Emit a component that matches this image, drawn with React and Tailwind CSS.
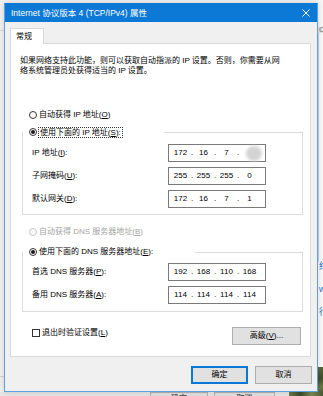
import React from "react";

const FONT = "font-['Liberation_Sans','Noto_Sans_CJK_SC',sans-serif]";

const Key = ({ k }) => <span className="underline">{k}</span>;

const Radio = ({ checked, disabled }) => (
  <span
    className={`w-[8px] h-[8px] rounded-full border bg-white flex items-center justify-center shrink-0 ${
      disabled ? "border-[#c4c4c4]" : "border-[#333]"
    }`}
  >
    {checked && <span className="w-[4px] h-[4px] rounded-full bg-[#1a1a1a]" />}
  </span>
);

const IpBox = ({ parts, blur }) => (
  <div className="relative w-[98px] h-[18px] border border-[#7a7a7a] bg-white flex items-center pl-[2px] text-[8px] text-black">
    {parts.map((p, i) => (
      <React.Fragment key={i}>
        {i > 0 && <span className="w-[4px] text-center">.</span>}
        <span className="w-[19px] text-center">{p}</span>
      </React.Fragment>
    ))}
    {blur && (
      <span className="absolute left-[77px] top-[1px] w-[16px] h-[15px] rounded-full bg-[#d4d4d4] blur-[1.5px]" />
    )}
  </div>
);

const Row = ({ label, parts, blur }) => (
  <div className="flex items-center justify-between pl-[9px] pr-[36px]">
    <span>{label}</span>
    <IpBox parts={parts} blur={blur} />
  </div>
);

const Btn = ({ children, primary, className = "" }) => (
  <div
    className={`h-[18px] flex items-center justify-center bg-[#e1e1e1] border ${
      primary ? "border-[#0a78d7] shadow-[inset_0_0_0_1px_#0a78d7]" : "border-[#adadad]"
    } ${className}`}
  >
    {children}
  </div>
);

export default function App() {
  return (
    <div className={`relative w-[323px] h-[396px] overflow-hidden bg-[#f1f1f1] text-[8px] leading-[10px] text-black ${FONT}`}>
      {/* background: left strip */}
      <div className="absolute left-0 top-[30px] w-[4px] h-px bg-[#d8d8d8]" />
      <div className="absolute left-0 top-[376px] w-[4px] h-px bg-[#d0d0d0]" />

      {/* background: right strip */}
      <div className="absolute right-0 top-0 w-[5px] h-full bg-[#fafafa] flex flex-col">
        <div className="h-[27px] bg-[#f7f7f7]" />
        <div className="h-[6px] bg-[#e4e4e4] text-[8px] leading-[6px] text-[#777] pl-[1px]">C</div>
        <div className="h-[229px] border-l border-[#b9d7f3]" />
        <div className="flex flex-col gap-[14px] text-[9px] leading-[9px] text-[#1f6fc5] pl-[1px]">
          <span>络</span>
          <span>w</span>
          <span>行</span>
        </div>
        <div className="mt-auto h-[29px] bg-[linear-gradient(160deg,#5b6b3e,#3f4e2c_40%,#6c7a48_70%,#3b4526)]" />
      </div>

      {/* background: bottom strip */}
      <div className="absolute left-0 bottom-0 w-full h-[4px] bg-[#e6e6e6] flex">
        <div className="ml-[150px] w-[58px] h-[6px] border border-[#b3b3b3] bg-[#e1e1e1] text-center text-[8px] leading-[12px]">确定</div>
        <div className="ml-[6px] w-[61px] h-[6px] border border-[#b3b3b3] bg-[#e1e1e1] text-center text-[8px] leading-[12px]">取消</div>
        <div className="ml-[14px] flex-1 bg-[linear-gradient(90deg,#6b7a49,#3e4b2b,#7c8956,#4a5733)]" />
      </div>

      {/* dialog window */}
      <div className="absolute left-[4px] top-[3px] w-[314px] h-[389px] border border-[#5d9fe0] border-t-[#0c79d6] bg-[#f0f0f0] flex flex-col shadow-[0_0_6px_rgba(0,0,0,0.15)]">
        <div className="h-[18px] bg-[#0c79d6] flex items-center justify-between pl-[6px] pr-[6px] text-white text-[8.5px]">
          <span>Internet 协议版本 4 (TCP/IPv4) 属性</span>
          <svg width="8" height="8" viewBox="0 0 8 8" className="mr-[1px]">
            <path d="M0.5 0.5 L7.5 7.5 M7.5 0.5 L0.5 7.5" stroke="white" strokeWidth="1" />
          </svg>
        </div>

        {/* tab */}
        <div className="ml-[5px] mt-[6px] w-[34px] h-[16px] -mb-px relative z-10 bg-white border-l border-t border-r border-[#d9d9d9] flex items-center pl-[5px]">
          常规
        </div>

        {/* panel */}
        <div className="ml-[5px] w-[301px] h-[314px] border border-[#d9d9d9] bg-white flex flex-col">
          <p className="mt-[12px] ml-[9px]">
            如果网络支持此功能，则可以获取自动指派的 IP 设置。否则，你需要从网
            <br />
            络系统管理员处获得适当的 IP 设置。
          </p>

          <div className="mt-[33px] ml-[18px] h-[12px] flex items-center gap-[2px]">
            <Radio />
            <span>
              自动获得 IP 地址(<Key k="O" />)
            </span>
          </div>

          <fieldset className="mt-[5px] ml-[11px] w-[281px] border border-[#dcdcdc] pb-[6px]">
            <legend className="w-[141px] h-[12px] flex items-center pl-[6px] gap-[1px] bg-white">
              <Radio checked />
              <span className="border border-dotted border-[#333] px-[1px] leading-[9px]">
                使用下面的 IP 地址(<Key k="S" />):
              </span>
            </legend>
            <div className="pt-[6px] flex flex-col gap-[5px]">
              <Row label={<>IP 地址(<Key k="I" />):</>} parts={["172", "16", "7", ""]} blur />
              <Row label={<>子网掩码(<Key k="U" />):</>} parts={["255", "255", "255", "0"]} />
              <Row label={<>默认网关(<Key k="D" />):</>} parts={["172", "16", "7", "1"]} />
            </div>
          </fieldset>

          <div className="mt-[11px] ml-[18px] h-[12px] flex items-center gap-[2px] text-[#a3a3a3]">
            <Radio disabled />
            <span>
              自动获得 DNS 服务器地址(<Key k="B" />)
            </span>
          </div>

          <fieldset className="mt-[8px] ml-[11px] w-[281px] border border-[#dcdcdc] pb-[7px]">
            <legend className="w-[172px] h-[12px] flex items-center pl-[6px] gap-[2px] bg-white">
              <Radio checked />
              <span>
                使用下面的 DNS 服务器地址(<Key k="E" />):
              </span>
            </legend>
            <div className="pt-[5px] flex flex-col gap-[5px]">
              <Row label={<>首选 DNS 服务器(<Key k="P" />):</>} parts={["192", "168", "110", "168"]} />
              <Row label={<>备用 DNS 服务器(<Key k="A" />):</>} parts={["114", "114", "114", "114"]} />
            </div>
          </fieldset>

          <div className="mt-[15px] ml-[21px] mr-[9px] flex items-start justify-between">
            <div className="h-[12px] flex items-center gap-[2px]">
              <span className="w-[8px] h-[8px] border border-[#333] bg-white" />
              <span>
                退出时验证设置(<Key k="L" />)
              </span>
            </div>
            <Btn className="w-[69px]">
              高级(<Key k="V" />)...
            </Btn>
          </div>
        </div>

        {/* dialog buttons */}
        <div className="mt-[9px] pr-[5px] flex justify-end gap-[7px]">
          <Btn primary className="w-[57px]">确定</Btn>
          <Btn className="w-[57px]">取消</Btn>
        </div>
      </div>
    </div>
  );
}
